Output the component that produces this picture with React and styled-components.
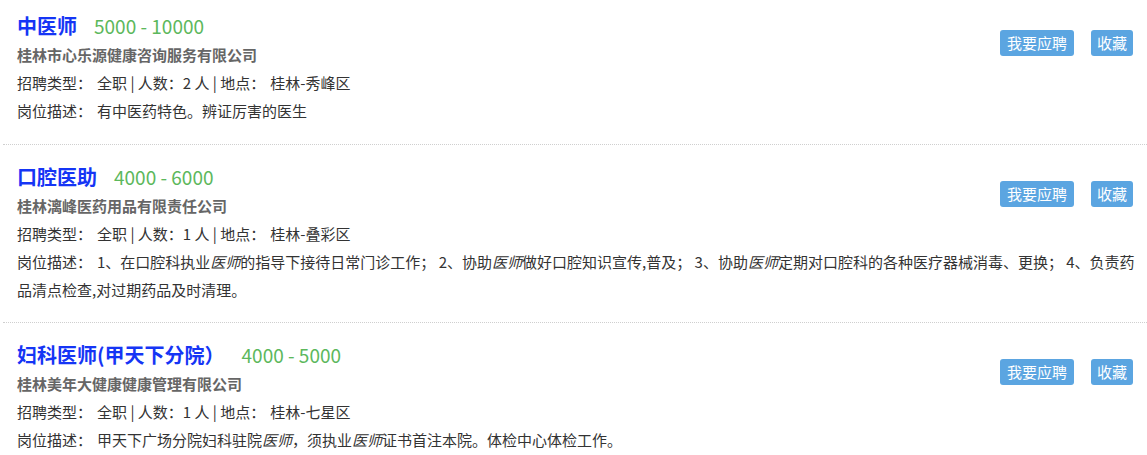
import React from 'react';
import styled, {createGlobalStyle} from 'styled-components';

const Global = createGlobalStyle`
  body {
    margin: 0;
    background: #fff;
    font-family: "Noto Sans CJK SC", "Noto Sans", sans-serif;
  }
`

const List = styled.div`
  padding-left: 3px;
`

const Item = styled.div`
  padding: 17px 0 18px 14px;
  border-bottom: 1px dotted #cfcfcf;
  &:first-child {
    padding-top: 11px;
    padding-bottom: 19px;
  }
`

const Actions = styled.div`
  float: right;
  display: flex;
  gap: 17px;
  margin: 19px 14px 0 0;
`

const Btn = styled.button`
  height: 26px;
  line-height: 26px;
  padding: 0 ${p => p.pad || 7}px;
  border: none;
  border-radius: 3px;
  background: #5ba5e1;
  color: #fff;
  font-family: inherit;
  font-size: 15px;
  cursor: pointer;
`

const TitleRow = styled.div`
  display: flex;
  align-items: baseline;
  height: 30px;
  line-height: 30px;
`

const Title = styled.a`
  font-size: 20px;
  font-weight: bold;
  color: #1535f5;
  text-decoration: none;
`

const Salary = styled.span`
  margin-left: 17px;
  font-size: 19px;
  color: #5cb85c;
`

const Company = styled.div`
  font-size: 15px;
  font-weight: bold;
  color: #666;
  line-height: 28px;
`

const Line = styled.div`
  font-size: 15px;
  color: #333;
  line-height: 28px;
`

const Value = styled.span`
  margin-left: 5px;
`

const jobs = [
  {
    title: '中医师',
    salary: '5000 - 10000',
    company: '桂林市心乐源健康咨询服务有限公司',
    type: '全职',
    num: 2,
    place: '桂林-秀峰区',
    desc: <>有中医药特色。辨证厉害的医生</>
  },
  {
    title: '口腔医助',
    salary: '4000 - 6000',
    company: '桂林漓峰医药用品有限责任公司',
    type: '全职',
    num: 1,
    place: '桂林-叠彩区',
    desc: <>1、在口腔科执业<em>医师</em>的指导下接待日常门诊工作； 2、协助<em>医师</em>做好口腔知识宣传,普及； 3、协助<em>医师</em>定期对口腔科的各种医疗器械消毒、更换； 4、负责药品清点检查,对过期药品及时清理。</>
  },
  {
    title: '妇科医师(甲天下分院）',
    salary: '4000 - 5000',
    company: '桂林美年大健康健康管理有限公司',
    type: '全职',
    num: 1,
    place: '桂林-七星区',
    desc: <>甲天下广场分院妇科驻院<em>医师</em>，须执业<em>医师</em>证书首注本院。体检中心体检工作。</>
  }
];

export default function App() {
  return (
    <>
      <Global />
      <List>
        {jobs.map(j => (
          <Item key={j.title}>
            <Actions>
              <Btn>我要应聘</Btn>
              <Btn pad={6}>收藏</Btn>
            </Actions>
            <TitleRow>
              <Title href="#">{j.title}</Title>
              <Salary>{j.salary}</Salary>
            </TitleRow>
            <Company>{j.company}</Company>
            <Line>招聘类型：<Value>{j.type} | 人数：{j.num} 人 | 地点：<Value>{j.place}</Value></Value></Line>
            <Line>岗位描述：<Value>{j.desc}</Value></Line>
          </Item>
        ))}
      </List>
    </>
  );
}
